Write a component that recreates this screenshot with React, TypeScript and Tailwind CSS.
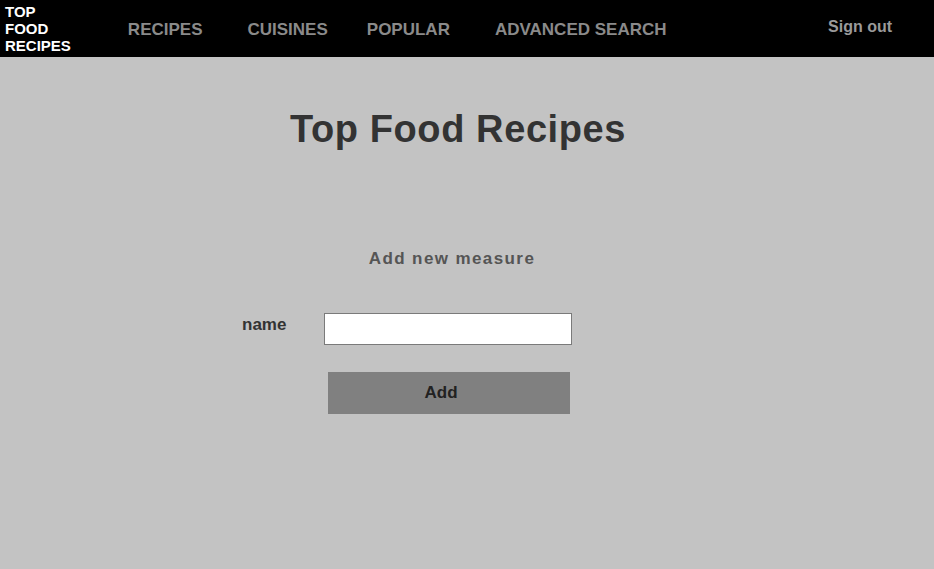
const font = { fontFamily: '"Liberation Sans", Arial, sans-serif' };

const navLinks = [
  { label: "RECIPES", className: "ml-[57px]" },
  { label: "CUISINES", className: "ml-[45px]" },
  { label: "POPULAR", className: "ml-[39px]" },
  { label: "ADVANCED SEARCH", className: "ml-[45px]" },
];

/**
 * Top navigation bar with logo text, section links and sign out.
 */
function Header() {
  return (
    <header className="flex h-[57px] items-start bg-black">
      <div className="pl-[5px] pt-[3px] text-[15px] font-bold leading-[17px] text-white">
        TOP
        <br />
        FOOD
        <br />
        RECIPES
      </div>
      <nav className="flex pt-[20px]">
        {navLinks.map((link) => (
          <a
            key={link.label}
            href="#"
            className={`${link.className} text-[17px] font-bold leading-[20px] text-[#8a8a8a]`}
          >
            {link.label}
          </a>
        ))}
      </nav>
      <a
        href="#"
        className="ml-auto mr-[42px] pt-[18px] text-[16px] font-bold leading-[18px] text-[#9a9a9a]"
      >
        Sign out
      </a>
    </header>
  );
}

export default function App() {
  return (
    <div className="min-h-[569px] bg-[#c3c3c3]" style={font}>
      <Header />
      <main>
        <h1 className="mt-[50px] pr-[18px] text-center text-[38px] font-bold leading-[44px] tracking-[0.6px] text-[#333333]">
          Top Food Recipes
        </h1>

        <h2 className="mt-[98px] pr-[30px] text-center text-[17px] font-bold leading-[20px] tracking-[1.4px] text-[#555555]">
          Add new measure
        </h2>

        <form className="ml-[242px] mt-[44px] w-[330px]">
          <div className="flex items-start">
            <label className="mt-[2px] w-[82px] text-[17px] font-bold leading-[20px] text-[#333333]">
              name
            </label>
            <input
              type="text"
              className="h-[32px] w-[248px] border border-[#7a7a7a] bg-white px-2 text-[15px] outline-none"
            />
          </div>
          <button
            type="button"
            className="ml-[86px] mt-[27px] h-[42px] w-[242px] bg-[#808080] pr-[16px] text-[17px] font-bold text-[#222222]"
          >
            Add
          </button>
        </form>
      </main>
    </div>
  );
}
